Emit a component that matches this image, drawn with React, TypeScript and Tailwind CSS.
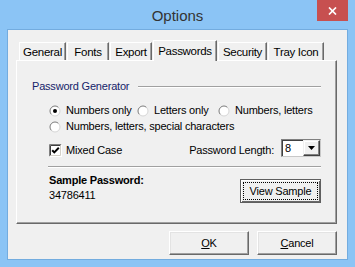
import React from 'react';

const tabs = [
  { label: 'General', w: 'w-[47px]', ml: 'ml-0' },
  { label: 'Fonts', w: 'w-[42px]', ml: 'ml-px' },
  { label: 'Export', w: 'w-[42px]', ml: 'ml-px' },
  { label: 'Passwords', w: 'w-[64px]', ml: 'ml-px', active: true },
  { label: 'Security', w: 'w-[49px]', ml: 'ml-px' },
  { label: 'Tray Icon', w: 'w-[56px]', ml: 'ml-px' },
];

function Radio({ checked }: { checked?: boolean }) {
  return (
    <svg width="12" height="12" viewBox="0 0 12 12" className="shrink-0">
      <circle cx="6" cy="6" r="5" fill="#fff" />
      <path d="M2.46 9.54 A5 5 0 0 1 9.54 2.46" stroke="#7a7a7a" fill="none" />
      <path d="M9.54 2.46 A5 5 0 0 1 2.46 9.54" stroke="#d6d6d6" fill="none" />
      {checked && <circle cx="6" cy="6" r="2" fill="#000" />}
    </svg>
  );
}

function RadioOption({ label, checked, w }: { label: string; checked?: boolean; w?: string }) {
  return (
    <div className={`flex items-center h-[13px] ${w ?? ''}`}>
      <Radio checked={checked} />
      <span className="ml-[5px] whitespace-nowrap">{label}</span>
    </div>
  );
}

function Checkbox() {
  return (
    <svg width="13" height="13" viewBox="0 0 13 13" className="shrink-0">
      <rect x="0" y="0" width="13" height="13" fill="#fff" />
      <path d="M0.5 12.5 V0.5 H12.5" stroke="#808080" fill="none" />
      <path d="M1.5 11.5 V1.5 H11.5" stroke="#404040" fill="none" />
      <path d="M12.5 0.5 V12.5 H0.5" stroke="#ffffff" fill="none" />
      <path d="M11.5 1.5 V11.5 H1.5" stroke="#d4d0c8" fill="none" />
      <path d="M3.2 6.2 L5.3 8.4 L9.8 3.8" stroke="#000" strokeWidth="2" fill="none" />
    </svg>
  );
}

function Button({ children, def }: { children: React.ReactNode; def?: boolean }) {
  if (def) {
    return (
      <div className="w-[81px] h-[24px] border border-[#5f5f5f] bg-[#f0f0f0] shadow-[inset_1px_1px_0_#fff,inset_-1px_-1px_0_#696969] p-[2px]">
        <div className="h-full border border-dotted border-black flex items-center justify-center">{children}</div>
      </div>
    );
  }
  return (
    <div className="w-[80px] h-[24px] border-t border-l border-white border-r border-b border-r-[#696969] border-b-[#696969] bg-[#f0f0f0] shadow-[inset_-1px_-1px_0_#a0a0a0,inset_1px_1px_0_#e3e3e3] flex items-center justify-center">
      {children}
    </div>
  );
}

export default function App() {
  return (
    <div className="w-[355px] h-[267px] bg-[#8bc4f5] relative flex flex-col overflow-hidden font-['Liberation_Sans',Arial,sans-serif] text-[11px] leading-[13px] tracking-[-0.2px] text-black">
      {/* title bar */}
      <div className="h-[29px] shrink-0 flex items-center justify-center pt-[3px] text-[15px] leading-[18px] tracking-normal text-[#333]">Options</div>
      <div className="absolute top-0 right-[7px] w-[31px] h-[21px] bg-[#c75050] flex items-center justify-center">
        <svg width="9" height="8" viewBox="0 0 9 8">
          <path d="M1 0.5 L8 7.5 M8 0.5 L1 7.5" stroke="#fff" strokeWidth="1.7" />
        </svg>
      </div>

      {/* client */}
      <div className="mx-[7px] mb-[7px] flex-1 border border-[#73acdf] bg-[#f0f0f0] flex flex-col pt-[10px] pl-[8px] pr-[10px]">
        {/* tabs */}
        <div className="flex items-start h-[21px] -mb-px pl-[3px] relative z-10 text-[11.5px] leading-[14px] tracking-[-0.3px]">
          {tabs.map((t) =>
            t.active ? (
              <div
                key={t.label}
                className={`${t.w} ${t.ml} h-[21px] bg-[#f0f0f0] border-t border-l border-white border-r border-r-[#696969] shadow-[inset_-1px_0_0_#a0a0a0] flex items-start justify-center pt-[3px]`}
              >
                {t.label}
              </div>
            ) : (
              <div
                key={t.label}
                className={`${t.w} ${t.ml} mt-[2px] h-[18px] bg-[#f0f0f0] border-t border-l border-white border-r border-r-[#696969] shadow-[inset_-1px_0_0_#a0a0a0] flex items-center justify-center`}
              >
                {t.label}
              </div>
            )
          )}
        </div>

        {/* panel */}
        <div className="w-[321px] h-[164px] shrink-0 border-t border-l border-white border-r border-b border-r-[#696969] border-b-[#696969] shadow-[inset_-1px_-1px_0_#a0a0a0] flex flex-col pr-[15px]">
          <div className="flex items-center h-[13px] mt-[19px] pl-[15px]">
            <span className="text-[#15246a] whitespace-nowrap">Password Generator</span>
            <div className="flex-1 ml-[9px] h-[2px] border-t border-t-[#a0a0a0] border-b border-b-white" />
          </div>

          <div className="pl-[32px] flex flex-col">
            <div className="flex mt-[11px]">
              <RadioOption label="Numbers only" checked w="w-[88px]" />
              <RadioOption label="Letters only" w="w-[81px]" />
              <RadioOption label="Numbers, letters" />
            </div>
            <div className="flex mt-[3px]">
              <RadioOption label="Numbers, letters, special characters" />
            </div>

            <div className="flex items-end h-[18px] mt-[6px]">
              <div className="flex items-center h-[13px]">
                <Checkbox />
                <span className="ml-[4px]">Mixed Case</span>
              </div>
              <div className="flex-1" />
              <span className="mr-[7px]">Password Length:</span>
              <div className="w-[40px] h-[18px] border border-t-[#808080] border-l-[#808080] border-r-[#c8c8c8] border-b-[#c8c8c8] shadow-[inset_1px_1px_0_#404040] bg-white flex">
                <span className="pl-[3px] pt-[2px] flex-1">8</span>
                <div className="w-[17px] h-full border-t border-l border-t-[#f0f0f0] border-l-[#f0f0f0] border-r border-b border-r-[#404040] border-b-[#404040] bg-[#f0f0f0] shadow-[inset_-1px_-1px_0_#808080,inset_1px_1px_0_#fff] flex items-center justify-center">
                  <svg width="7" height="4" viewBox="0 0 7 4">
                    <path d="M0 0 H7 L3.5 4 Z" fill="#000" />
                  </svg>
                </div>
              </div>
            </div>

            <div className="mt-[9px] -ml-px h-[2px] border-t border-t-[#a0a0a0] border-b border-b-white" />

            <div className="flex justify-between mt-[6px]">
              <div className="flex flex-col">
                <span className="font-bold">Sample Password:</span>
                <span className="mt-[2px]">34786411</span>
              </div>
              <div className="mt-[5px]">
                <Button def>View Sample</Button>
              </div>
            </div>
          </div>
        </div>

        {/* bottom buttons */}
        <div className="flex justify-end gap-[8px] mt-[7px] w-[321px]">
          <Button>
            <span>
              <span className="underline underline-offset-1">O</span>K
            </span>
          </Button>
          <Button>
            <span>
              <span className="underline underline-offset-1">C</span>ancel
            </span>
          </Button>
        </div>
      </div>
    </div>
  );
}
